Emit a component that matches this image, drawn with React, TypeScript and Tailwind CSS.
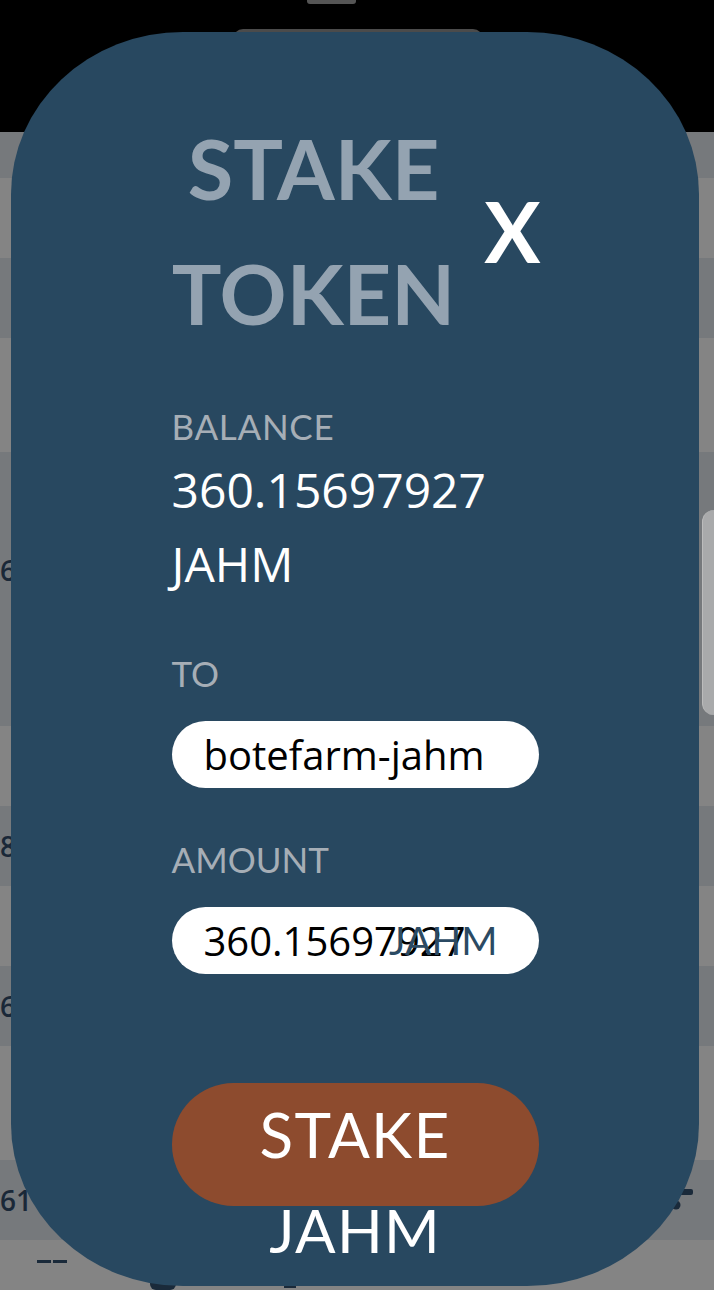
import React from 'react';

const rows = [
  { h: 'h-[46px]', dark: true },
  { h: 'h-[80px]', dark: false },
  { h: 'h-[80px]', dark: true },
  { h: 'h-[114px]', dark: false },
  { h: 'h-[274px]', dark: true },
  { h: 'h-[80px]', dark: false },
  { h: 'h-[80px]', dark: true },
  { h: 'h-[80px]', dark: false },
  { h: 'h-[80px]', dark: true },
  { h: 'h-[114px]', dark: false },
  { h: 'h-[80px]', dark: true },
  { h: 'h-[50px]', dark: false },
];

const rowText: Record<number, string> = { 4: '6', 6: '8', 8: '6', 10: '61' };

const Background = () => (
  <div className="w-[714px] h-[1290px] overflow-hidden flex flex-col">
    <div className="h-[132px] bg-black flex flex-col">
      <div className="ml-[307px] w-[49px] h-[4px] rounded-b-[3px] bg-[#555]" />
      <div className="ml-[233px] mt-[25px] w-[250px] h-[10px] rounded-t-[10px] bg-[#4b4b4b]" />
    </div>
    {rows.map((row, i) => (
      <div
        key={i}
        className={`${row.h} relative flex justify-between ${row.dark ? 'bg-[#76797c]' : 'bg-[#848484]'} ${i === 4 ? 'items-start' : 'items-center'}`}
      >
        <span
          className={`text-[28px] leading-none font-semibold text-[#1a2838] ${i === 4 ? 'mt-[104px]' : ''}`}
          style={{ fontFamily: '"Open Sans", sans-serif' }}
        >
          {rowText[i] ?? ''}
        </span>
        {i === 4 && (
          <div className="mt-[58px] w-[12px] h-[205px] rounded-l-[20px] bg-[#a9aaab] border-l border-[#bcbcbc]" />
        )}
        {i === 10 && (
          <svg width="24" height="24" viewBox="0 0 24 24" className="mr-[20px] mt-[2px]">
            <rect x="3" y="0" width="20" height="6" rx="2" fill="#1a2a3a" />
            <circle cx="6" cy="16" r="4.5" fill="#1a2a3a" />
          </svg>
        )}
        {i === 11 && (
          <div className="absolute left-[37px] top-[20px] flex gap-[2px]">
            <div className="w-[14px] h-[3px] bg-[#1a2a3a]" />
            <div className="w-[14px] h-[3px] bg-[#1a2a3a]" />
          </div>
        )}
        {i === 11 && (
          <div className="absolute left-[150px] top-[42px] flex items-start gap-[40px]">
            <div className="w-[26px] h-[8px] rounded-b-[6px] bg-[#1a2a3a]" />
            <div className="w-[28px] h-[4px] bg-[#1a2a3a]" />
            <div className="w-[12px] h-[6px] bg-[#1a2a3a]" />
            <div className="w-[28px] h-[4px] bg-[#1a2a3a]" />
          </div>
        )}
      </div>
    ))}
  </div>
);

const label = 'text-[35px] leading-[42px] text-[#a6aeb6]';
const lato = { fontFamily: 'Lato, sans-serif' };
const open = { fontFamily: '"Open Sans", sans-serif' };

const StakeModal = () => (
  <div className="absolute left-[11px] top-[32px] w-[688px] h-[1254px] rounded-[172px/162px] bg-[#284860] flex flex-col items-center pt-[74px]">
    <div className="w-[367px] flex flex-col">
      <div className="flex items-center justify-between">
        <h1
          className="w-[284px] text-center text-[83px] leading-[125px] font-bold text-[#94a3b1]"
          style={lato}
        >
          STAKE TOKEN
        </h1>
        <span className="text-[84px] leading-none font-bold text-white -mr-[2px]" style={lato}>
          X
        </span>
      </div>

      <div className={`mt-[49px] ${label} tracking-[0.02em]`} style={lato}>BALANCE</div>
      <div className="mt-[6px] text-[48px] leading-[74px] text-white" style={open}>
        360.15697927 JAHM
      </div>

      <div className={`mt-[51px] ${label}`} style={lato}>TO</div>
      <input
        readOnly
        value="botefarm-jahm"
        className="mt-[27px] h-[67px] w-full rounded-full bg-white pl-[32px] text-[40px] text-black outline-none"
        style={open}
      />

      <div className={`mt-[50px] ${label}`} style={lato}>AMOUNT</div>
      <div className="relative mt-[27px]">
        <input
          readOnly
          value="360.15697927"
          className="h-[67px] w-full rounded-full bg-white pl-[32px] text-[40px] text-black outline-none"
          style={open}
        />
        <span
          className="absolute right-[41px] top-0 h-[67px] flex items-center text-[39px] text-[#2b4a63]"
          style={lato}
        >
          JAHM
        </span>
      </div>

      <button
        className="mt-[109px] h-[123px] w-full rounded-full bg-[#8d4b2e] text-white flex flex-col items-center justify-start pt-[3px]"
        style={lato}
      >
        <span className="text-[62px] leading-[96px] tracking-[0.02em]">STAKE</span>
        <span className="text-[60px] leading-[96px] tracking-[0.02em]">JAHM</span>
      </button>
    </div>
  </div>
);

export default function App() {
  return (
    <div className="relative w-[714px] h-[1290px] overflow-hidden">
      <Background />
      <StakeModal />
    </div>
  );
}
